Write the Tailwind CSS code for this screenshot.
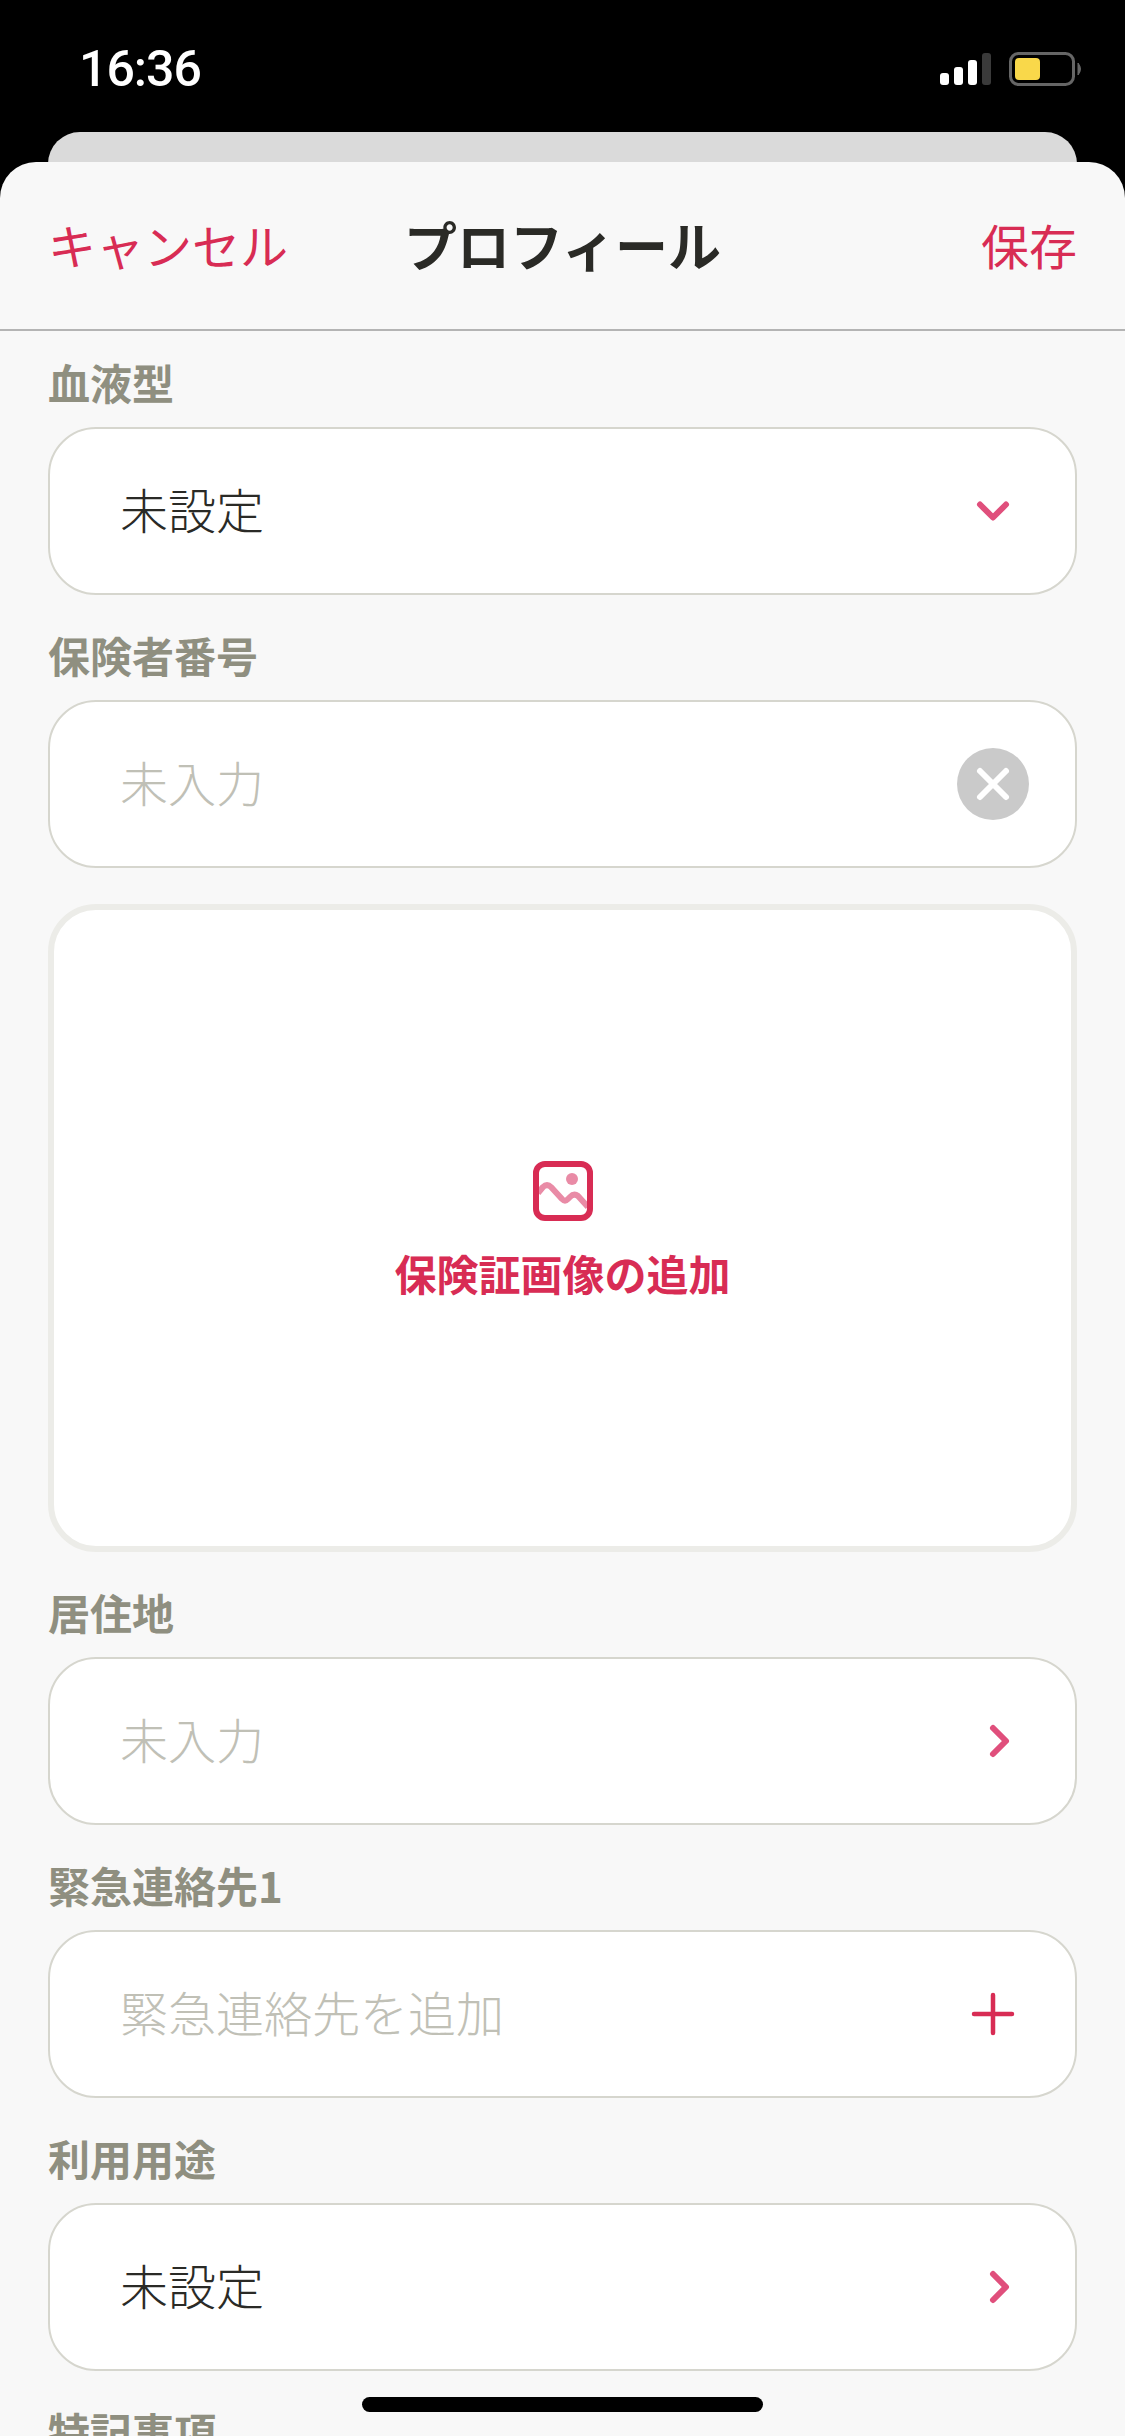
<!DOCTYPE html>
<html lang="ja">
<head>
  <meta charset="UTF-8" />
  <title>プロフィール</title>
  <script src="https://cdn.jsdelivr.net/npm/@tailwindcss/browser@4"></script>
</head>
<body class="relative w-[1125px] h-[2436px] overflow-hidden bg-black font-['Noto_Sans_CJK_JP','Noto_Sans',sans-serif]">

  <!-- status bar -->
  <div class="h-[132px] flex items-start justify-between pl-[79px] pr-[40px] pt-[40px]">
    <span class="text-white text-[50px] leading-[58px] font-medium tracking-[-1px] font-['Roboto',sans-serif]">16:36</span>
    <svg width="145" height="40" viewBox="0 0 145 40" class="mt-[12px]">
      <rect x="0" y="21" width="9" height="12" rx="3" fill="#fff"/>
      <rect x="14" y="15" width="9" height="18" rx="3" fill="#fff"/>
      <rect x="28" y="8" width="9" height="25" rx="3" fill="#fff"/>
      <rect x="42" y="1" width="9" height="32" rx="3" fill="#3a3a3a"/>
      <rect x="70.5" y="1.5" width="63" height="31" rx="8" fill="none" stroke="#666" stroke-width="3"/>
      <rect x="75" y="6" width="25" height="22" rx="4" fill="#f9d84a"/>
      <path d="M138 11 q5 6 0 12 z" fill="#666" stroke="#666" stroke-width="1"/>
    </svg>
  </div>

  <!-- sheet behind -->
  <div class="absolute left-[48px] top-[132px] w-[1029px] h-[60px] bg-[#dadada] rounded-t-[32px]"></div>

  <!-- sheet -->
  <div class="absolute left-0 top-[162px] w-[1125px] h-[2274px] bg-[#f8f8f8] rounded-t-[36px] overflow-hidden">
    <header class="h-[169px] border-b-[2px] border-[#b4b4b4] flex items-center justify-between px-[48px] pb-[4px]">
      <span class="text-[#d82c54] text-[48px] leading-[60px] w-[300px]">キャンセル</span>
      <span class="text-[#2a2a26] text-[53px] leading-[60px] font-bold">プロフィール</span>
      <span class="text-[#d82c54] text-[48px] leading-[60px] w-[300px] text-right">保存</span>
    </header>

    <div class="px-[48px] pt-[21px]">
      <div class="text-[#8f8f80] text-[42px] leading-[60px] font-bold mb-[15px]">血液型</div>
      <div class="h-[168px] bg-white border-2 border-[#d6d6ce] rounded-[48px] flex items-center justify-between pl-[70px] pr-[46px]">
        <span class="text-[#2a2a26] text-[48px] font-light mb-[6px]">未設定</span>
        <svg width="72" height="72" viewBox="0 0 72 72"><path d="M23 29.5 L36 42.5 L49 29.5" fill="none" stroke="#e04f7c" stroke-width="6" stroke-linecap="round" stroke-linejoin="round"/></svg>
      </div>

      <div class="text-[#8f8f80] text-[42px] leading-[60px] font-bold mt-[30px] mb-[15px]">保険者番号</div>
      <div class="h-[168px] bg-white border-2 border-[#d6d6ce] rounded-[48px] flex items-center justify-between pl-[70px] pr-[46px]">
        <span class="text-[#c0c0b6] text-[48px] font-light mb-[6px]">未入力</span>
        <svg width="72" height="72" viewBox="0 0 72 72"><circle cx="36" cy="36" r="36" fill="#cacaca"/><path d="M23 23 L49 49 M49 23 L23 49" stroke="#fff" stroke-width="6" stroke-linecap="round"/></svg>
      </div>

      <div class="mt-[36px] h-[648px] bg-white border-[6px] border-[#ecece8] rounded-[48px] flex flex-col items-center justify-center pt-[8px]">
        <svg width="60" height="60" viewBox="0 0 60 60">
          <path d="M5 32 L10 26 Q14 22 18 26 L29 38 Q32 41 35 38 L37 36 Q41 32 45 35 L55 46" fill="none" stroke="#e98ba6" stroke-width="6" stroke-linejoin="round"/>
          <circle cx="39" cy="18" r="6" fill="#e98ba6"/>
          <rect x="3" y="3" width="54" height="54" rx="9" fill="none" stroke="#d82c54" stroke-width="6"/>
        </svg>
        <span class="text-[#d82c54] text-[42px] leading-[60px] font-bold mt-[22px]">保険証画像の追加</span>
      </div>

      <div class="text-[#8f8f80] text-[42px] leading-[60px] font-bold mt-[30px] mb-[15px]">居住地</div>
      <div class="h-[168px] bg-white border-2 border-[#d6d6ce] rounded-[48px] flex items-center justify-between pl-[70px] pr-[46px]">
        <span class="text-[#c0c0b6] text-[48px] font-light mb-[6px]">未入力</span>
        <svg width="72" height="72" viewBox="0 0 72 72"><path d="M36 23 L49 36 L36 49" fill="none" stroke="#e04f7c" stroke-width="6" stroke-linecap="round" stroke-linejoin="round"/></svg>
      </div>

      <div class="text-[#8f8f80] text-[42px] leading-[60px] font-bold mt-[30px] mb-[15px]">緊急連絡先1</div>
      <div class="h-[168px] bg-white border-2 border-[#d6d6ce] rounded-[48px] flex items-center justify-between pl-[70px] pr-[46px]">
        <span class="text-[#c0c0b6] text-[48px] font-light mb-[6px]">緊急連絡先を追加</span>
        <svg width="72" height="72" viewBox="0 0 72 72"><path d="M17 36 H55 M36 17 V55" stroke="#d82c54" stroke-width="4.5" stroke-linecap="round"/></svg>
      </div>

      <div class="text-[#8f8f80] text-[42px] leading-[60px] font-bold mt-[30px] mb-[15px]">利用用途</div>
      <div class="h-[168px] bg-white border-2 border-[#d6d6ce] rounded-[48px] flex items-center justify-between pl-[70px] pr-[46px]">
        <span class="text-[#2a2a26] text-[48px] font-light mb-[6px]">未設定</span>
        <svg width="72" height="72" viewBox="0 0 72 72"><path d="M36 23 L49 36 L36 49" fill="none" stroke="#e04f7c" stroke-width="6" stroke-linecap="round" stroke-linejoin="round"/></svg>
      </div>

      <div class="text-[#8f8f80] text-[42px] leading-[60px] font-bold mt-[30px]">特記事項</div>
    </div>
  </div>

  <!-- home indicator -->
  <div class="absolute left-[362px] top-[2397px] w-[401px] h-[15px] bg-black rounded-full"></div>
</body>
</html>
